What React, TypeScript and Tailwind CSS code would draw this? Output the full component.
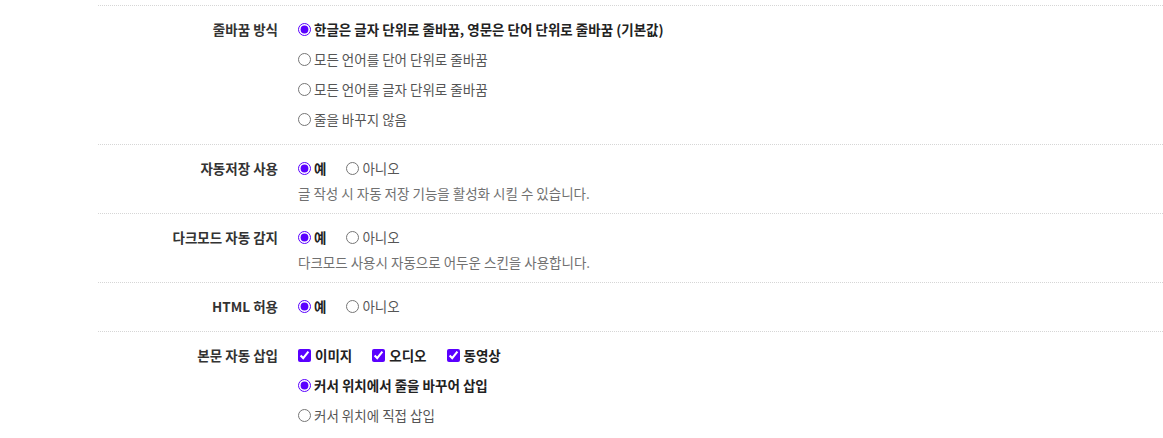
import type { ReactNode } from 'react'

type Opt = { label: string; checked?: boolean }

function Radio({ name, label, checked }: { name: string; label: string; checked?: boolean }) {
  return (
    <label className="flex items-center gap-[3px] h-[30px]">
      <input
        type="radio"
        name={name}
        defaultChecked={checked}
        className="w-[13px] h-[13px] m-0 accent-[#5a00ff]"
      />
      <span className={checked ? 'font-bold text-[#222]' : 'text-[#555]'}>{label}</span>
    </label>
  )
}

function Check({ label }: { label: string }) {
  return (
    <label className="flex items-center gap-[4px] h-[30px]">
      <input type="checkbox" defaultChecked className="w-[13px] h-[13px] m-0 accent-[#5a00ff]" />
      <span className="font-bold text-[#222]">{label}</span>
    </label>
  )
}

function Row({ label, children }: { label: string; children: ReactNode }) {
  return (
    <div className="flex border-t border-dotted border-[#d6d6d6] pt-2 pb-2.5">
      <div className="w-[180px] shrink-0 text-right font-bold text-[#333] leading-[30px]">{label}</div>
      <div className="pl-5 flex flex-col">{children}</div>
    </div>
  )
}

function YesNo({ name, desc }: { name: string; desc?: string }) {
  return (
    <>
      <div className="flex gap-5">
        <Radio name={name} label="예" checked />
        <Radio name={name} label="아니오" />
      </div>
      {desc && <p className="leading-[20px] text-[#707070]">{desc}</p>}
    </>
  )
}

export default function App() {
  const wrapOpts: Opt[] = [
    { label: '한글은 글자 단위로 줄바꿈, 영문은 단어 단위로 줄바꿈 (기본값)', checked: true },
    { label: '모든 언어를 단어 단위로 줄바꿈' },
    { label: '모든 언어를 글자 단위로 줄바꿈' },
    { label: '줄을 바꾸지 않음' },
  ]

  return (
    <div className="min-h-screen bg-white pt-[5px] pl-[98px] text-[13.5px] font-['Noto_Sans_CJK_KR','Noto_Sans',sans-serif]">
      <Row label="줄바꿈 방식">
        {wrapOpts.map((o) => (
          <Radio key={o.label} name="wrap" label={o.label} checked={o.checked} />
        ))}
      </Row>

      <Row label="자동저장 사용">
        <YesNo name="autosave" desc="글 작성 시 자동 저장 기능을 활성화 시킬 수 있습니다." />
      </Row>

      <Row label="다크모드 자동 감지">
        <YesNo name="darkmode" desc="다크모드 사용시 자동으로 어두운 스킨을 사용합니다." />
      </Row>

      <Row label="HTML 허용">
        <YesNo name="html" />
      </Row>

      <Row label="본문 자동 삽입">
        <div className="flex gap-5">
          <Check label="이미지" />
          <Check label="오디오" />
          <Check label="동영상" />
        </div>
        <Radio name="insert" label="커서 위치에서 줄을 바꾸어 삽입" checked />
        <Radio name="insert" label="커서 위치에 직접 삽입" />
      </Row>
    </div>
  )
}
